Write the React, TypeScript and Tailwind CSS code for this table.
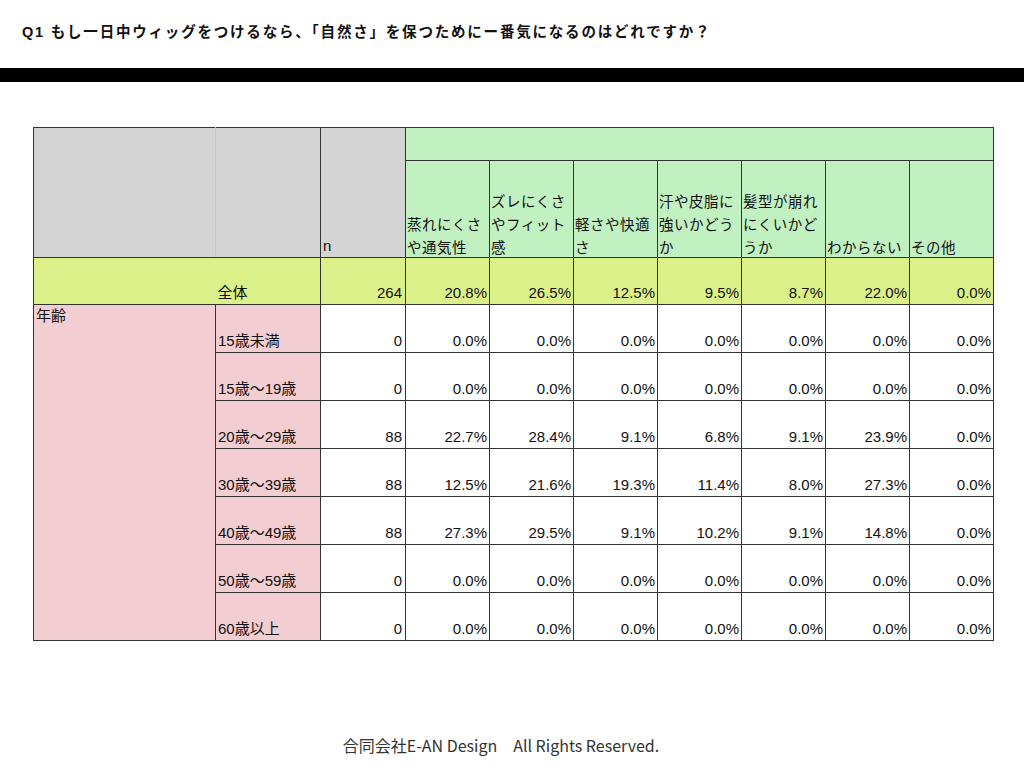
import React from 'react';

const headers = [
  '蒸れにくさや通気性',
  'ズレにくさやフィット感',
  '軽さや快適さ',
  '汗や皮脂に強いかどうか',
  '髪型が崩れにくいかどうか',
  'わからない',
  'その他',
];

const total = ['20.8%', '26.5%', '12.5%', '9.5%', '8.7%', '22.0%', '0.0%'];

const rows: { label: string; n: string; values: string[] }[] = [
  { label: '15歳未満', n: '0', values: ['0.0%', '0.0%', '0.0%', '0.0%', '0.0%', '0.0%', '0.0%'] },
  { label: '15歳〜19歳', n: '0', values: ['0.0%', '0.0%', '0.0%', '0.0%', '0.0%', '0.0%', '0.0%'] },
  { label: '20歳〜29歳', n: '88', values: ['22.7%', '28.4%', '9.1%', '6.8%', '9.1%', '23.9%', '0.0%'] },
  { label: '30歳〜39歳', n: '88', values: ['12.5%', '21.6%', '19.3%', '11.4%', '8.0%', '27.3%', '0.0%'] },
  { label: '40歳〜49歳', n: '88', values: ['27.3%', '29.5%', '9.1%', '10.2%', '9.1%', '14.8%', '0.0%'] },
  { label: '50歳〜59歳', n: '0', values: ['0.0%', '0.0%', '0.0%', '0.0%', '0.0%', '0.0%', '0.0%'] },
  { label: '60歳以上', n: '0', values: ['0.0%', '0.0%', '0.0%', '0.0%', '0.0%', '0.0%', '0.0%'] },
];

const font = { fontFamily: '"Liberation Sans", "Noto Sans CJK JP", sans-serif' };

export default function App() {
  return (
    <div className="w-[1024px] h-[770px] bg-white text-[#111] flex flex-col" style={font}>
      {/* Title */}
      <div className="pt-[22px] pl-[22px] h-[68px] text-[14.5px] font-bold tracking-[1.8px] leading-5 whitespace-nowrap">
        Q1 もし一日中ウィッグをつけるなら、「自然さ」を保つためにー番気になるのはどれですか？
      </div>
      <div className="h-[14px] bg-black" />

      {/* Table */}
      <div className="pl-[33px] pt-[45px]">
        <table className="border-collapse table-fixed w-[961px] text-[15px] leading-[22px]">
          <colgroup>
            <col className="w-[182px]" />
            <col className="w-[105px]" />
            <col className="w-[85px]" />
            {headers.map((h) => (
              <col key={h} className="w-[84px]" />
            ))}
          </colgroup>
          <tbody>
            <tr className="h-[33px]">
              <td rowSpan={2} className="bg-[#d4d4d4] border border-[#333] border-r-[#c6c6c6]" />
              <td rowSpan={2} className="bg-[#d4d4d4] border border-[#333] border-l-[#c6c6c6]" />
              <td rowSpan={2} className="bg-[#d4d4d4] border border-[#333] align-bottom px-[2px] pb-0">
                n
              </td>
              <td colSpan={7} className="bg-[#c1f0c1] border border-[#333]" />
            </tr>
            <tr className="h-[97px]">
              {headers.map((h) => (
                <td
                  key={h}
                  className="bg-[#c1f0c1] border border-[#333] align-bottom pl-[1px] pr-0 pb-0 break-all text-[14.5px] leading-[23px] tracking-[0.5px]"
                >
                  <span className="relative top-[3px]">{h}</span>
                </td>
              ))}
            </tr>
            <tr className="h-[47px]">
              <td className="bg-[#dcf089] border-y border-l border-[#333]" />
              <td className="bg-[#dcf089] border-y border-r border-[#333] align-bottom pl-[2px] pb-0">全体</td>
              <td className="bg-[#dcf089] border border-[#333] align-bottom text-right pr-[3px] pb-0">264</td>
              {total.map((v, i) => (
                <td key={i} className="bg-[#dcf089] border border-[#333] align-bottom text-right pr-[2px] pb-0">
                  {v}
                </td>
              ))}
            </tr>
            {rows.map((r, ri) => (
              <tr key={r.label} className="h-[48px]">
                {ri === 0 && (
                  <td rowSpan={rows.length} className="bg-[#f2cdd1] border border-[#333] align-top pl-[2px] pt-0">
                    年齢
                  </td>
                )}
                <td className="bg-[#f2cdd1] border border-[#333] align-bottom pl-[2px] pb-0">{r.label}</td>
                <td className="border border-[#333] align-bottom text-right pr-[3px] pb-0">{r.n}</td>
                {r.values.map((v, i) => (
                  <td key={i} className="border border-[#333] align-bottom text-right pr-[2px] pb-0">
                    {v}
                  </td>
                ))}
              </tr>
            ))}
          </tbody>
        </table>
      </div>

      {/* Footer */}
      <div className="mt-auto pb-[13px] text-center text-[16px] text-[#333] pr-[22px]" style={{ fontFamily: '"Noto Sans CJK JP", "Noto Sans", sans-serif' }}>
        合同会社E-AN Design　All Rights Reserved.
      </div>
    </div>
  );
}
